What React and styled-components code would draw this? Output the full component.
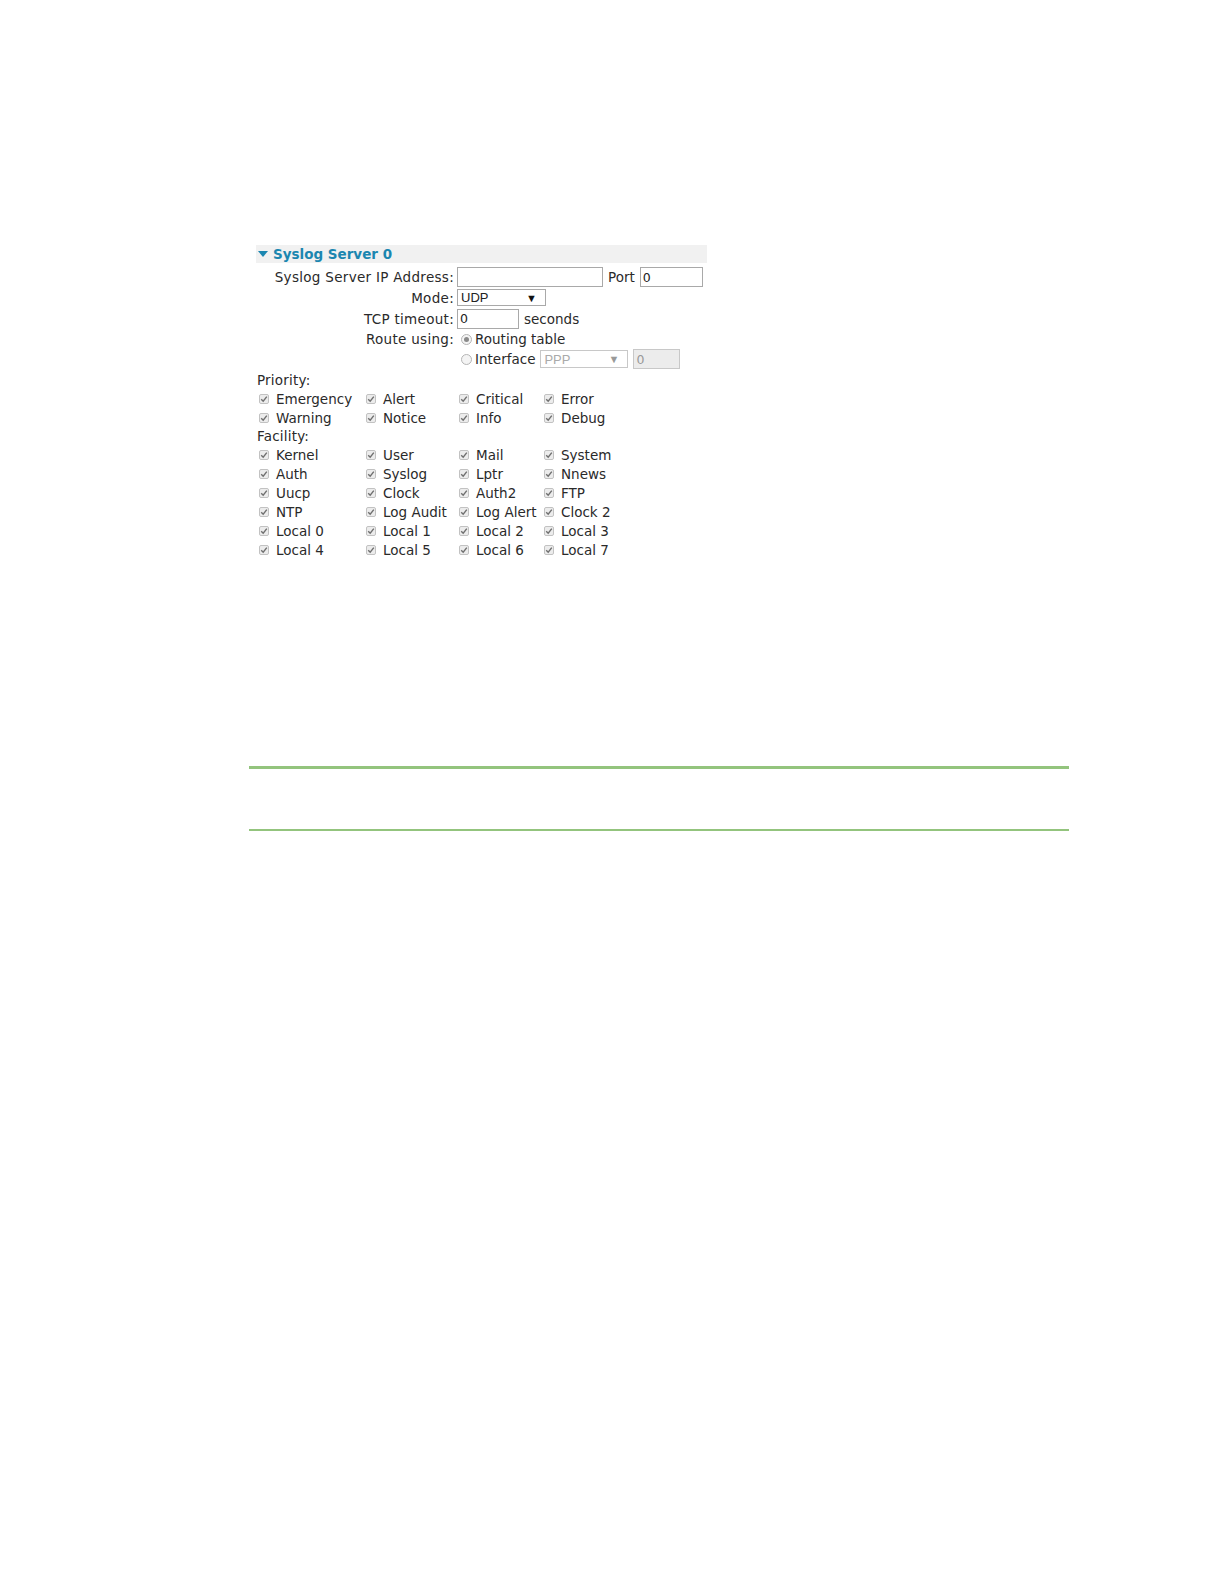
import React from "react";
import styled, { createGlobalStyle } from "styled-components";

const Global = createGlobalStyle`
  html, body { margin: 0; padding: 0; background: #fff; }
  body { font-family: "DejaVu Sans", Verdana, sans-serif; font-size: 13.5px; color: #2a2a2a; }
`;

const Page = styled.div`
  width: 1224px;
  height: 1584px;
  box-sizing: border-box;
  padding-top: 245px;
  display: flex;
  flex-direction: column;
`;

const Panel = styled.div`
  margin-left: 256px;
  width: 451px;
  display: flex;
  flex-direction: column;
`;

const Header = styled.div`
  height: 18px;
  background: #f1f1f1;
  display: flex;
  align-items: center;
  gap: 5px;
  padding-left: 2px;
  font-weight: bold;
  font-size: 13.5px;
  color: #1b86b0;
`;

const Rows = styled.div`
  display: flex;
  flex-direction: column;
  margin-top: 4px;
`;

const Row = styled.div`
  display: grid;
  grid-template-columns: 198px 1fr;
  column-gap: 3px;
  align-items: center;
  height: ${(p) => p.h}px;
  margin-bottom: ${(p) => p.mb || 0}px;
`;

const Label = styled.div`
  text-align: right;
  white-space: nowrap;
  letter-spacing: 0.3px;
`;

const Field = styled.div`
  display: flex;
  align-items: center;
  gap: ${(p) => p.gap || 5}px;
  white-space: nowrap;
`;

const TextBox = styled.div`
  box-sizing: border-box;
  width: ${(p) => p.w}px;
  height: ${(p) => p.h || 20}px;
  border: 1px solid ${(p) => (p.disabled ? "#c8c8c8" : "#a9a9a9")};
  background: ${(p) => (p.disabled ? "#ececec" : "#fff")};
  color: ${(p) => (p.disabled ? "#999" : "#222")};
  padding-left: 2px;
  display: flex;
  align-items: center;
  font-size: 12.5px;
`;

const Select = styled.div`
  box-sizing: border-box;
  width: ${(p) => p.w}px;
  height: ${(p) => p.h}px;
  border: 1px solid ${(p) => (p.disabled ? "#c8c8c8" : "#a9a9a9")};
  background: #fff;
  color: ${(p) => (p.disabled ? "#aaa" : "#222")};
  padding: 0 8px 0 3px;
  display: flex;
  align-items: center;
  justify-content: space-between;
  font-family: "Liberation Sans", Arial, sans-serif;
  font-size: 13px;
`;

const Arrow = styled.span`
  font-size: 11px;
  color: ${(p) => (p.disabled ? "#999" : "#111")};
`;

const Radio = styled.span`
  box-sizing: border-box;
  width: 11px;
  height: 11px;
  border-radius: 50%;
  border: 1px solid #b5b5b5;
  background: #f4f4f4;
  margin-left: 4px;
  display: inline-flex;
  align-items: center;
  justify-content: center;
  &::after {
    content: "";
    width: 5px;
    height: 5px;
    border-radius: 50%;
    background: ${(p) => (p.checked ? "#8a8a8a" : "transparent")};
  }
`;

const SectionTitle = styled.div`
  height: 18px;
  line-height: 18px;
  padding-left: 1px;
  letter-spacing: 0.2px;
  margin-top: ${(p) => p.mt || 0}px;
`;

const Grid = styled.div`
  display: grid;
  grid-template-columns: 107px 93px 85px auto;
  grid-auto-rows: 19px;
  padding-left: 3px;
`;

const Check = styled.div`
  display: flex;
  align-items: center;
  gap: 7px;
  white-space: nowrap;
`;

const Box = styled.span`
  box-sizing: border-box;
  width: 10px;
  height: 10px;
  border: 1px solid #c2c2c2;
  border-radius: 2px;
  background: #ececec;
  display: inline-flex;
  align-items: center;
  justify-content: center;
`;

const Rules = styled.div`
  margin-top: 207px;
  margin-left: 249px;
  width: 820px;
  height: 65px;
  box-sizing: border-box;
  border-top: 3px solid #93c47d;
  border-bottom: 2px solid #93c47d;
`;

const Tick = () => (
  <svg width="8" height="8" viewBox="0 0 8 8">
    <path d="M1.2 4.2 L3.2 6.2 L6.8 1.6" fill="none" stroke="#6f6f6f" strokeWidth="1.4" />
  </svg>
);

const CheckItem = ({ label }) => (
  <Check>
    <Box>
      <Tick />
    </Box>
    {label}
  </Check>
);

const priority = ["Emergency", "Alert", "Critical", "Error", "Warning", "Notice", "Info", "Debug"];
const facility = [
  "Kernel", "User", "Mail", "System",
  "Auth", "Syslog", "Lptr", "Nnews",
  "Uucp", "Clock", "Auth2", "FTP",
  "NTP", "Log Audit", "Log Alert", "Clock 2",
  "Local 0", "Local 1", "Local 2", "Local 3",
  "Local 4", "Local 5", "Local 6", "Local 7",
];

export default function App() {
  return (
    <>
      <Global />
      <Page>
        <Panel>
          <Header>
            <svg width="10" height="7" viewBox="0 0 10 7">
              <path d="M0 0 H10 L5 6 Z" fill="#1b86b0" />
            </svg>
            Syslog Server 0
          </Header>
          <Rows>
            <Row h={20} mb={1}>
              <Label>Syslog Server IP Address:</Label>
              <Field gap={5}>
                <TextBox w={146} />
                <span>Port</span>
                <TextBox w={63}>0</TextBox>
              </Field>
            </Row>
            <Row h={19} mb={1}>
              <Label>Mode:</Label>
              <Field>
                <Select w={89} h={17}>
                  UDP<Arrow>▼</Arrow>
                </Select>
              </Field>
            </Row>
            <Row h={21}>
              <Label>TCP timeout:</Label>
              <Field>
                <TextBox w={62}>0</TextBox>
                <span>seconds</span>
              </Field>
            </Row>
            <Row h={20}>
              <Label>Route using:</Label>
              <Field gap={3}>
                <Radio checked />
                <span>Routing table</span>
              </Field>
            </Row>
            <Row h={20}>
              <Label />
              <Field gap={3}>
                <Radio />
                <span>Interface</span>
                <Select w={88} h={18} disabled style={{ marginLeft: 2 }}>
                  PPP<Arrow disabled>▼</Arrow>
                </Select>
                <TextBox w={47} disabled style={{ marginLeft: 2 }}>0</TextBox>
              </Field>
            </Row>
          </Rows>
          <SectionTitle mt={2}>Priority:</SectionTitle>
          <Grid>
            {priority.map((p) => (
              <CheckItem key={p} label={p} />
            ))}
          </Grid>
          <SectionTitle>Facility:</SectionTitle>
          <Grid>
            {facility.map((p) => (
              <CheckItem key={p} label={p} />
            ))}
          </Grid>
        </Panel>
        <Rules />
      </Page>
    </>
  );
}
